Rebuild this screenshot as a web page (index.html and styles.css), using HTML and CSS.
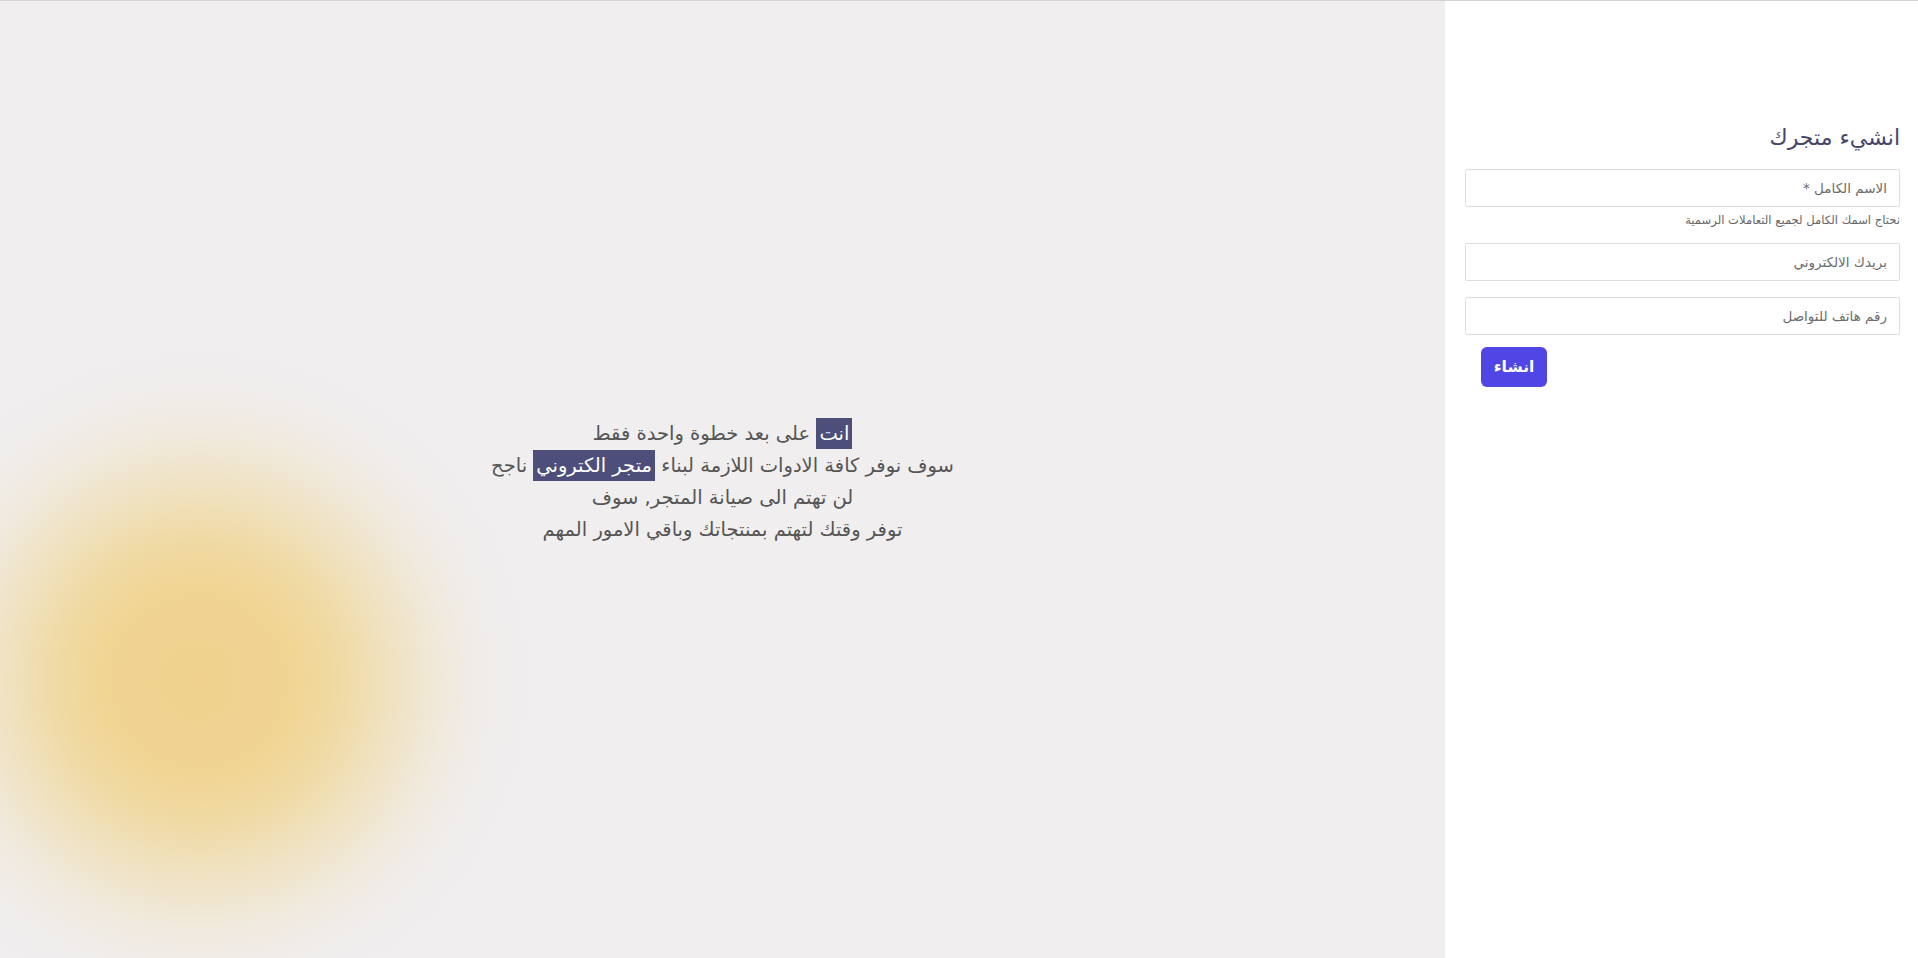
FILE: index.html
```html
<!DOCTYPE html>
<html lang="ar" dir="rtl">
<head>
<meta charset="utf-8">
<title>انشيء متجرك</title>
<link rel="stylesheet" href="styles.css">
</head>
<body>
<div class="page">
  <aside class="side">
    <h1 class="title">انشيء متجرك</h1>
    <form class="form">
      <div class="field">
        <input class="input" type="text" placeholder="الاسم الكامل *">
        <p class="help">نحتاج اسمك الكامل لجميع التعاملات الرسمية</p>
      </div>
      <div class="field">
        <input class="input" type="email" placeholder="بريدك الالكتروني">
      </div>
      <div class="field">
        <input class="input" type="tel" placeholder="رقم هاتف للتواصل">
      </div>
      <div class="actions">
        <button class="btn" type="button">انشاء</button>
      </div>
    </form>
  </aside>
  <main class="hero">
    <p class="pitch">
      <span class="mark">انت</span> على بعد خطوة واحدة فقط<br>
      سوف نوفر كافة الادوات اللازمة لبناء <span class="mark">متجر الكتروني</span> ناجح<br>
      لن تهتم الى صيانة المتجر, سوف<br>
      توفر وقتك لتهتم بمنتجاتك وباقي الامور المهم
    </p>
  </main>
</div>
</body>
</html>
```
FILE: styles.css
```css
* { box-sizing: border-box; }
html, body { margin: 0; padding: 0; height: 100%; }
body {
  font-family: "DejaVu Sans", "Liberation Sans", sans-serif;
  border-top: 1px solid #d4d4d4;
  overflow: hidden;
}
.page {
  display: flex;
  height: 957px;
}
.side {
  width: 473px;
  flex: none;
  background: #ffffff;
  padding: 118px 18px 0 20px;
}
.title {
  margin: 0 0 12px 0;
  font-size: 22px;
  font-weight: normal;
  line-height: 38px;
  color: #45466a;
}
.form { display: flex; flex-direction: column; }
.field { margin-bottom: 16px; }
.input {
  display: block;
  width: 100%;
  height: 38px;
  border: 1px solid #dedede;
  border-radius: 2px;
  padding: 0 12px;
  font-family: inherit;
  font-size: 13.5px;
  color: #333;
  background: #fff;
  direction: rtl;
}
.input::placeholder { color: #6c6c6c; }
.help {
  margin: 5px 0 -1px 0;
  font-size: 11.6px;
  line-height: 16px;
  color: #666;
}
.actions {
  display: flex;
  justify-content: flex-end;
  padding-left: 16px;
  margin-top: -4px;
}
.btn {
  width: 66px;
  height: 40px;
  border: none;
  border-radius: 6px;
  background: #4f46e5;
  color: #fff;
  font-family: inherit;
  font-size: 15.5px;
  font-weight: bold;
}
.hero {
  flex: 1;
  display: flex;
  align-items: center;
  justify-content: center;
  background:
    radial-gradient(circle at 198px 680px, #f0d28e 0, #f0d492 90px, rgba(240,214,150,0.85) 140px, rgba(240,219,165,0.6) 195px, rgba(240,226,192,0.35) 250px, rgba(240,234,225,0.15) 300px, rgba(240,238,239,0) 340px),
    #f0eeef;
}
.pitch {
  margin: 0;
  padding-top: 4px;
  text-align: center;
  font-size: 19.5px;
  line-height: 32px;
  color: #555;
}
.mark {
  background: #4d4f7a;
  color: #fff;
  padding: 4px 3px;
}
```
